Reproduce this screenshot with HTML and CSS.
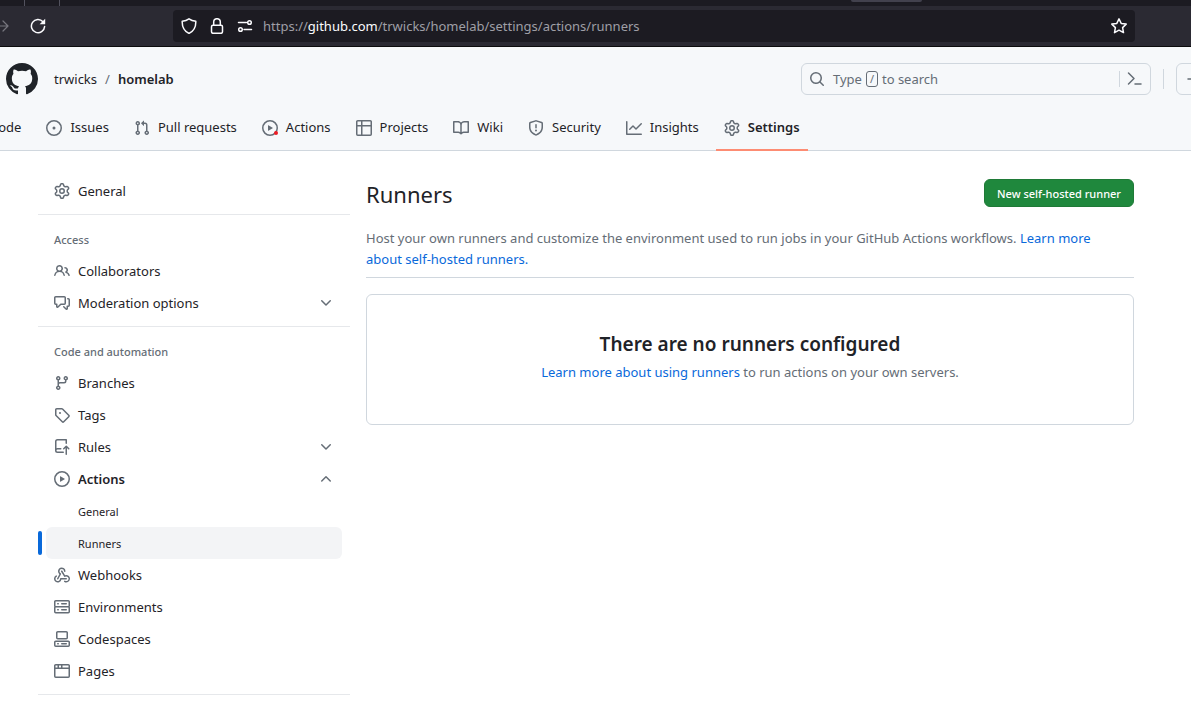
FILE: index.html
```html
<!DOCTYPE html>
<html lang="en">
<head>
<meta charset="utf-8">
<title>Runners · trwicks/homelab</title>
<link rel="stylesheet" href="styles.css">
</head>
<body>
<svg class="sprite" aria-hidden="true">
  <symbol id="gear" viewBox="0 0 16 16"><path d="M8 0a8.2 8.2 0 0 1 .701.031C9.444.095 9.99.645 10.16 1.29l.288 1.107c.018.066.079.158.212.224.231.114.454.243.668.386.123.082.233.09.299.071l1.103-.303c.644-.176 1.392.021 1.82.63.27.385.506.792.704 1.218.315.675.111 1.422-.364 1.891l-.814.806c-.049.048-.098.147-.088.294.016.257.016.515 0 .772-.01.147.038.246.088.294l.814.806c.475.469.679 1.216.364 1.891a7.977 7.977 0 0 1-.704 1.217c-.428.61-1.176.807-1.82.63l-1.102-.302c-.067-.019-.177-.011-.3.071a5.909 5.909 0 0 1-.668.386c-.133.066-.194.158-.211.224l-.29 1.106c-.168.646-.715 1.196-1.458 1.26a8.006 8.006 0 0 1-1.402 0c-.743-.064-1.289-.614-1.458-1.26l-.289-1.106c-.018-.066-.079-.158-.212-.224a5.738 5.738 0 0 1-.668-.386c-.123-.082-.233-.09-.299-.071l-1.103.303c-.644.176-1.392-.021-1.82-.63a8.12 8.12 0 0 1-.704-1.218c-.315-.675-.111-1.422.363-1.891l.815-.806c.05-.048.098-.147.088-.294a6.214 6.214 0 0 1 0-.772c.01-.147-.038-.246-.088-.294l-.815-.806C.635 6.045.431 5.298.746 4.623a7.92 7.92 0 0 1 .704-1.217c.428-.61 1.176-.807 1.82-.63l1.102.302c.067.019.177.011.3-.071.214-.143.437-.272.668-.386.133-.066.194-.158.211-.224l.29-1.106C6.009.645 6.556.095 7.299.03 7.53.01 7.764 0 8 0Zm-.571 1.525c-.036.003-.108.036-.137.146l-.289 1.105c-.147.561-.549.967-.998 1.189-.173.086-.34.183-.5.29-.417.278-.97.423-1.529.27l-1.103-.303c-.109-.03-.175.016-.195.045-.22.312-.412.644-.573.99-.014.031-.021.11.059.19l.815.806c.411.406.562.957.53 1.456a4.709 4.709 0 0 0 0 .582c.032.499-.119 1.05-.53 1.456l-.815.806c-.081.08-.073.159-.059.19.162.346.353.677.573.989.02.03.085.076.195.046l1.102-.303c.56-.153 1.113-.008 1.53.27.161.107.328.204.501.29.447.222.85.629.997 1.189l.289 1.105c.029.109.101.143.137.146a6.6 6.6 0 0 0 1.142 0c.036-.003.108-.036.137-.146l.289-1.105c.147-.561.549-.967.998-1.189.173-.086.34-.183.5-.29.417-.278.97-.423 1.529-.27l1.103.303c.109.029.175-.016.195-.045.22-.313.411-.644.573-.99.014-.031.021-.11-.059-.19l-.815-.806c-.411-.406-.562-.957-.53-1.456a4.709 4.709 0 0 0 0-.582c-.032-.499.119-1.05.53-1.456l.815-.806c.081-.08.073-.159.059-.19a6.464 6.464 0 0 0-.573-.989c-.02-.03-.085-.076-.195-.046l-1.102.303c-.56.153-1.113.008-1.53-.27a4.44 4.44 0 0 0-.501-.29c-.447-.222-.85-.629-.997-1.189l-.289-1.105c-.029-.11-.101-.143-.137-.146a6.6 6.6 0 0 0-1.142 0ZM11 8a3 3 0 1 1-6 0 3 3 0 0 1 6 0ZM9.5 8a1.5 1.5 0 1 0-3.001.001A1.5 1.5 0 0 0 9.5 8Z"/></symbol>
  <symbol id="code" viewBox="0 0 16 16"><path d="m11.28 3.22 4.25 4.25a.75.75 0 0 1 0 1.06l-4.25 4.25-1.06-1.06L13.94 8l-3.72-3.72ZM4.72 3.22.47 7.47a.75.75 0 0 0 0 1.06l4.25 4.25 1.06-1.06L2.06 8l3.72-3.72Z"/></symbol>
  <symbol id="issue" viewBox="0 0 16 16"><path d="M8 9.5a1.5 1.5 0 1 0 0-3 1.5 1.5 0 0 0 0 3Z"/><path d="M8 0a8 8 0 1 1 0 16A8 8 0 0 1 8 0ZM1.5 8a6.5 6.5 0 1 0 13 0 6.5 6.5 0 0 0-13 0Z"/></symbol>
  <symbol id="pull" viewBox="0 0 16 16"><path d="M1.5 3.25a2.25 2.25 0 1 1 3 2.122v5.256a2.251 2.251 0 1 1-1.5 0V5.372A2.25 2.25 0 0 1 1.5 3.25Zm5.677-.177L9.573.677A.25.25 0 0 1 10 .854V2.5h1A2.5 2.5 0 0 1 13.5 5v5.628a2.251 2.251 0 1 1-1.5 0V5a1 1 0 0 0-1-1h-1v1.646a.25.25 0 0 1-.427.177L7.177 3.427a.25.25 0 0 1 0-.354ZM3.75 2.5a.75.75 0 1 0 0 1.5.75.75 0 0 0 0-1.5Zm0 9.5a.75.75 0 1 0 0 1.5.75.75 0 0 0 0-1.5Zm8.25.75a.75.75 0 1 0 1.5 0 .75.75 0 0 0-1.5 0Z"/></symbol>
  <symbol id="play" viewBox="0 0 16 16"><path d="M8 0a8 8 0 1 1 0 16A8 8 0 0 1 8 0ZM1.5 8a6.5 6.5 0 1 0 13 0 6.5 6.5 0 0 0-13 0Zm4.879-2.773 4.264 2.559a.25.25 0 0 1 0 .428l-4.264 2.559A.25.25 0 0 1 6 10.559V5.442a.25.25 0 0 1 .379-.215Z"/></symbol>
  <symbol id="table" viewBox="0 0 16 16"><path d="M0 1.75C0 .784.784 0 1.75 0h12.5C15.216 0 16 .784 16 1.75v12.5A1.75 1.75 0 0 1 14.25 16H1.75A1.75 1.75 0 0 1 0 14.25ZM6.5 6.5v8h7.75a.25.25 0 0 0 .25-.25V6.5Zm8-1.5V1.75a.25.25 0 0 0-.25-.25H6.5V5Zm-13 1.5v7.75c0 .138.112.25.25.25H5v-8ZM5 5V1.5H1.75a.25.25 0 0 0-.25.25V5Z"/></symbol>
  <symbol id="book" viewBox="0 0 16 16"><path d="M0 1.75A.75.75 0 0 1 .75 1h4.253c1.227 0 2.317.59 3 1.501A3.743 3.743 0 0 1 11.006 1h4.245a.75.75 0 0 1 .75.75v10.5a.75.75 0 0 1-.75.75h-4.507a2.25 2.25 0 0 0-1.591.659l-.622.621a.75.75 0 0 1-1.06 0l-.622-.621A2.25 2.25 0 0 0 5.258 13H.75a.75.75 0 0 1-.75-.75Zm7.251 10.324.004-5.073-.002-2.253A2.25 2.25 0 0 0 5.003 2.5H1.5v9h3.757a3.75 3.75 0 0 1 1.994.574ZM8.755 4.75l-.004 7.322a3.752 3.752 0 0 1 1.992-.572H14.5v-9h-3.495a2.25 2.25 0 0 0-2.25 2.25Z"/></symbol>
  <symbol id="shield" viewBox="0 0 16 16"><path d="M7.467.133a1.748 1.748 0 0 1 1.066 0l5.25 1.68A1.75 1.75 0 0 1 15 3.48V7c0 1.566-.32 3.182-1.303 4.682-.983 1.498-2.585 2.813-5.032 3.855a1.697 1.697 0 0 1-1.33 0c-2.447-1.042-4.049-2.357-5.032-3.855C1.32 10.182 1 8.566 1 7V3.48a1.755 1.755 0 0 1 1.217-1.667Zm.61 1.429a.25.25 0 0 0-.153 0l-5.25 1.68a.25.25 0 0 0-.174.238V7c0 1.358.275 2.666 1.057 3.86.784 1.194 2.121 2.34 4.366 3.297a.196.196 0 0 0 .154 0c2.245-.956 3.582-2.104 4.366-3.298C13.225 9.666 13.5 8.36 13.5 7V3.48a.251.251 0 0 0-.174-.237l-5.25-1.68ZM8.75 4.75v3a.75.75 0 0 1-1.5 0v-3a.75.75 0 0 1 1.5 0ZM9 10.5a1 1 0 1 1-2 0 1 1 0 0 1 2 0Z"/></symbol>
  <symbol id="graph" viewBox="0 0 16 16"><path d="M1.5 1.75V13.5h13.75a.75.75 0 0 1 0 1.5H.75a.75.75 0 0 1-.75-.75V1.75a.75.75 0 0 1 1.5 0Zm14.28 2.53-5.25 5.25a.75.75 0 0 1-1.06 0L7 7.06 4.28 9.78a.751.751 0 0 1-1.06-1.06l3.25-3.25a.75.75 0 0 1 1.06 0L10 7.94l4.72-4.72a.751.751 0 0 1 1.06 1.06Z"/></symbol>
  <symbol id="search" viewBox="0 0 16 16"><path d="M10.68 11.74a6 6 0 0 1-7.922-8.982 6 6 0 0 1 8.982 7.922l3.04 3.04a.749.749 0 1 1-1.06 1.06ZM11.5 7a4.499 4.499 0 1 0-8.997 0A4.499 4.499 0 0 0 11.5 7Z"/></symbol>
  <symbol id="people" viewBox="0 0 16 16"><path d="M2 5.5a3.5 3.5 0 1 1 5.898 2.549 5.508 5.508 0 0 1 3.034 4.084.75.75 0 1 1-1.482.235 4 4 0 0 0-7.9 0 .75.75 0 0 1-1.482-.236A5.507 5.507 0 0 1 3.102 8.05 3.493 3.493 0 0 1 2 5.5ZM11 4a3.001 3.001 0 0 1 2.22 5.018 5.01 5.01 0 0 1 2.56 3.012.749.749 0 0 1-1.44.408 3.507 3.507 0 0 0-2.522-2.372.75.75 0 0 1-.574-.73v-.352a.75.75 0 0 1 .416-.672A1.5 1.5 0 0 0 11 5.5.75.75 0 0 1 11 4Zm-5.5-.5a2 2 0 1 0-.001 3.999A2 2 0 0 0 5.5 3.5Z"/></symbol>
  <symbol id="comments" viewBox="0 0 16 16"><path d="M1.75 1h8.5c.966 0 1.75.784 1.75 1.75v5.5A1.75 1.75 0 0 1 10.25 10H7.061l-2.574 2.573A1.458 1.458 0 0 1 2 11.543V10h-.25A1.75 1.75 0 0 1 0 8.25v-5.5C0 1.784.784 1 1.75 1ZM1.5 2.75v5.5c0 .138.112.25.25.25h1a.75.75 0 0 1 .75.75v2.19l2.72-2.72a.749.749 0 0 1 .53-.22h3.5a.25.25 0 0 0 .25-.25v-5.5a.25.25 0 0 0-.25-.25h-8.5a.25.25 0 0 0-.25.25Zm13 2a.25.25 0 0 0-.25-.25h-.5a.75.75 0 0 1 0-1.5h.5c.966 0 1.75.784 1.75 1.75v5.5A1.75 1.75 0 0 1 14.25 12H14v1.543a1.458 1.458 0 0 1-2.487 1.03L9.22 12.28a.749.749 0 1 1 1.06-1.06l2.22 2.22v-2.19a.75.75 0 0 1 .75-.75h1a.25.25 0 0 0 .25-.25Z"/></symbol>
  <symbol id="branch" viewBox="0 0 16 16"><path d="M9.5 3.25a2.25 2.25 0 1 1 3 2.122V6A2.5 2.5 0 0 1 10 8.5H6a1 1 0 0 0-1 1v1.128a2.251 2.251 0 1 1-1.5 0V5.372a2.25 2.25 0 1 1 1.5 0v1.836A2.493 2.493 0 0 1 6 7h4a1 1 0 0 0 1-1v-.628A2.25 2.25 0 0 1 9.5 3.25Zm-6 0a.75.75 0 1 0 1.5 0 .75.75 0 0 0-1.5 0Zm8.25-.75a.75.75 0 1 0 0 1.5.75.75 0 0 0 0-1.5ZM4.25 12a.75.75 0 1 0 0 1.5.75.75 0 0 0 0-1.5Z"/></symbol>
  <symbol id="tag" viewBox="0 0 16 16"><path d="M1 7.775V2.75C1 1.784 1.784 1 2.75 1h5.025c.464 0 .91.184 1.238.513l6.25 6.25a1.75 1.75 0 0 1 0 2.474l-5.026 5.026a1.75 1.75 0 0 1-2.474 0l-6.25-6.25A1.752 1.752 0 0 1 1 7.775Zm1.5 0c0 .066.026.13.073.177l6.25 6.25a.25.25 0 0 0 .354 0l5.025-5.025a.25.25 0 0 0 0-.354l-6.25-6.25a.25.25 0 0 0-.177-.073H2.75a.25.25 0 0 0-.25.25ZM6 5a1 1 0 1 1 0 2 1 1 0 0 1 0-2Z"/></symbol>
  <symbol id="rules" viewBox="0 0 16 16"><path d="M1 2.5A2.5 2.5 0 0 1 3.5 0h8.75a.75.75 0 0 1 .75.75v3.5a.75.75 0 0 1-1.5 0V1.5h-8a1 1 0 0 0-1 1v6.708A2.493 2.493 0 0 1 3.5 9h3.25a.75.75 0 0 1 0 1.5H3.5a1 1 0 0 0 0 2h5.75a.75.75 0 0 1 0 1.5H3.5A2.5 2.5 0 0 1 1 11.5Zm13.23 7.79-1.24-1.224v6.184a.75.75 0 0 1-1.5 0V9.066L10.26 10.29a.75.75 0 0 1-1.04-1.08l2.505-2.474a.746.746 0 0 1 1.06 0l2.505 2.474a.75.75 0 0 1-1.06 1.08Z"/></symbol>
  <symbol id="hook" viewBox="0 0 16 16"><path d="M5.5 4.25a2.25 2.25 0 0 1 4.5 0 .75.75 0 0 0 1.5 0 3.75 3.75 0 1 0-6.14 2.889l-2.272 4.258a.75.75 0 0 0 1.324.706L7 7.25a.75.75 0 0 0-.309-1.015A2.25 2.25 0 0 1 5.5 4.25Z"/><path d="M7.364 3.607a.75.75 0 0 1 1.03.257l2.608 4.349a3.75 3.75 0 1 1-.628 6.785.75.75 0 0 1 .752-1.299 2.25 2.25 0 1 0-.033-3.88.75.75 0 0 1-1.03-.256L7.107 4.636a.75.75 0 0 1 .257-1.03Z"/><path d="M2.9 8.776A.75.75 0 0 1 2.625 9.8 2.25 2.25 0 1 0 6 11.75a.75.75 0 0 1 .75-.751h5.5a.75.75 0 0 1 0 1.5H7.425a3.751 3.751 0 1 1-5.55-3.998.75.75 0 0 1 1.024.274Z"/></symbol>
  <symbol id="server" viewBox="0 0 16 16"><path d="M1.75 1h12.5c.966 0 1.75.784 1.75 1.75v4c0 .372-.116.717-.314 1 .198.283.314.628.314 1v4a1.75 1.75 0 0 1-1.75 1.75H1.75A1.75 1.75 0 0 1 0 12.75v-4c0-.358.109-.707.314-1a1.739 1.739 0 0 1-.314-1v-4C0 1.784.784 1 1.750 1ZM1.500 2.750v4c0 .138.112.25.25.25h12.500a.25.25 0 0 0 .25-.25v-4a.25.25 0 0 0-.25-.25H1.750a.25.25 0 0 0-.25.25Zm.25 5.750a.25.25 0 0 0-.25.25v4c0 .138.112.25.25.25h12.500a.25.25 0 0 0 .25-.25v-4a.25.25 0 0 0-.25-.25ZM7 4.750A.75.75 0 0 1 7.750 4h4.500a.75.75 0 0 1 0 1.500h-4.500A.75.75 0 0 1 7 4.750ZM7.750 10h4.500a.75.75 0 0 1 0 1.500h-4.500a.75.75 0 0 1 0-1.500ZM3 4.750A.75.75 0 0 1 3.750 4h.5a.75.75 0 0 1 0 1.500h-.5A.75.75 0 0 1 3 4.750ZM3.750 10h.5a.75.75 0 0 1 0 1.500h-.5a.75.75 0 0 1 0-1.500Z"/></symbol>
  <symbol id="codespace" viewBox="0 0 16 16"><path d="M0 11.25c0-.966.784-1.75 1.75-1.75h12.5c.966 0 1.75.784 1.75 1.75v3A1.75 1.75 0 0 1 14.25 16H1.75A1.75 1.75 0 0 1 0 14.25Zm2-9.5C2 .784 2.784 0 3.75 0h8.5C13.216 0 14 .784 14 1.75v5a1.75 1.75 0 0 1-1.75 1.75h-8.5A1.75 1.75 0 0 1 2 6.75Zm1.75-.25a.25.25 0 0 0-.25.25v5c0 .138.112.25.25.25h8.5a.25.25 0 0 0 .25-.25v-5a.25.25 0 0 0-.25-.25Zm-2 9.5a.25.25 0 0 0-.25.25v3c0 .138.112.25.25.25h12.5a.25.25 0 0 0 .25-.25v-3a.25.25 0 0 0-.25-.25ZM7 12.75a.75.75 0 0 1 .75-.75h4.5a.75.75 0 0 1 0 1.5h-4.5a.75.75 0 0 1-.75-.75Zm-4 0a.75.75 0 0 1 .75-.75h.5a.75.75 0 0 1 0 1.5h-.5a.75.75 0 0 1-.75-.75Z"/></symbol>
  <symbol id="browser" viewBox="0 0 16 16"><path d="M0 2.75C0 1.784.784 1 1.75 1h12.5c.966 0 1.75.784 1.75 1.75v10.5A1.75 1.75 0 0 1 14.25 15H1.75A1.75 1.75 0 0 1 0 13.25ZM14.5 6h-13v7.25c0 .138.112.25.25.25h12.5a.25.25 0 0 0 .25-.25Zm-6-3.5v2h6V2.75a.25.25 0 0 0-.25-.25ZM5 2.5v2h2v-2Zm-3.25 0a.25.25 0 0 0-.25.25V4.5h2v-2Z"/></symbol>
  <symbol id="down" viewBox="0 0 16 16"><path d="M12.78 5.22a.749.749 0 0 1 0 1.06l-4.25 4.25a.749.749 0 0 1-1.06 0L3.22 6.28a.749.749 0 1 1 1.06-1.06L8 8.939l3.72-3.719a.749.749 0 0 1 1.06 0Z"/></symbol>
  <symbol id="up" viewBox="0 0 16 16"><path d="M3.22 10.53a.749.749 0 0 1 0-1.06l4.25-4.25a.749.749 0 0 1 1.06 0l4.25 4.25a.749.749 0 1 1-1.06 1.06L8 6.811 4.28 10.53a.749.749 0 0 1-1.06 0Z"/></symbol>
  <symbol id="mark" viewBox="0 0 16 16"><path d="M8 0c4.42 0 8 3.58 8 8a8.013 8.013 0 0 1-5.45 7.59c-.4.08-.55-.17-.55-.38 0-.27.01-1.13.01-2.2 0-.75-.25-1.23-.54-1.48 1.78-.2 3.65-.88 3.65-3.95 0-.88-.31-1.59-.82-2.15.08-.2.36-1.02-.08-2.12 0 0-.67-.22-2.2.82-.64-.18-1.32-.27-2-.27-.68 0-1.36.09-2 .27-1.53-1.03-2.2-.82-2.2-.82-.44 1.1-.16 1.92-.08 2.12-.51.56-.82 1.28-.82 2.15 0 3.06 1.86 3.75 3.64 3.95-.23.2-.44.55-.51 1.07-.46.21-1.61.55-2.33-.66-.15-.24-.6-.83-1.23-.82-.67.01-.27.38.01.53.34.19.73.9.82 1.13.16.45.68 1.31 2.69.94 0 .67.01 1.3.01 1.49 0 .21-.15.45-.55.38A7.995 7.995 0 0 1 0 8c0-4.42 3.58-8 8-8Z"/></symbol>
</svg>

<div class="browser">
  <div class="browser-tabs"><span class="tab-line"></span><span class="tab-line"></span><span class="tab-pill"></span></div>
  <div class="toolbar">
    <button class="tool dim" aria-label="Forward"><svg class="icon" viewBox="0 0 16 16"><path class="line" d="M0 8h14M9 3l5 5-5 5"/></svg></button>
    <button class="tool" aria-label="Reload"><svg class="icon" viewBox="0 0 16 16"><path class="line bold" d="M13 3.8A6.6 6.6 0 1 0 14.6 8.6"/><path d="M15.2.7v5a.6.6 0 0 1-.6.6h-5Z"/></svg></button>
    <div class="address">
      <svg class="icon" viewBox="0 0 16 16"><path class="line bold" d="M8 .8C10 2.200 12.600 3 14.800 3.300 15 9 12.500 13.300 8 15.400 3.500 13.300 1 9 1.200 3.300 3.400 3 6 2.200 8 .8Z"/></svg>
      <svg class="icon" viewBox="0 0 16 16"><rect class="line bold" x="2.500" y="7.300" width="11" height="8" rx="1.500"/><path class="line bold" d="M4.700 7V4a3.300 3.300 0 0 1 6.600 0v3"/></svg>
      <svg class="icon" viewBox="0 0 16 16"><path class="line bold" d="M1.500 4.500h8M7 11.500h7.500"/><circle class="line bold" cx="12.500" cy="4.500" r="1.800"/><circle class="line bold" cx="3.500" cy="11.500" r="1.800"/></svg>
      <span class="url">https://<b>github.com</b>/trwicks/homelab/settings/actions/runners</span>
      <button class="tool" aria-label="Bookmark"><svg class="icon" viewBox="0 0 16 16"><path class="line bold" d="m8 .9 2.200 4.500 5 .7-3.600 3.500.9 5L8 12.200l-4.500 2.400.9-5L.8 6.100l5-.7Z"/></svg></button>
    </div>
  </div>
</div>

<header class="header">
  <div class="header-row">
    <a href="#" aria-label="Homepage"><svg class="logo"><use href="#mark"/></svg></a>
    <nav class="crumbs" aria-label="Breadcrumb"><a href="#">trwicks</a><span class="slash">/</span><a class="strong" href="#">homelab</a></nav>
    <div class="search">
      <button class="search-button"><svg class="icon"><use href="#search"/></svg><span>Type</span><kbd>/</kbd><span>to search</span></button>
      <button class="palette" aria-label="Command palette"><svg class="icon" viewBox="0 0 16 16"><path class="line bold" d="m1.500 2 5.500 5.500L1.500 13M8 13h6"/></svg></button>
    </div>
    <span class="divider"></span>
    <button class="create" aria-label="Create new"><svg class="icon" viewBox="0 0 16 16"><path class="line bold" d="M3 8h12M9 2v12"/></svg></button>
  </div>
  <nav class="tabs" aria-label="Repository">
    <a href="#"><svg class="icon"><use href="#code"/></svg>Code</a>
    <a href="#"><svg class="icon"><use href="#issue"/></svg>Issues</a>
    <a href="#"><svg class="icon"><use href="#pull"/></svg>Pull requests</a>
    <a href="#"><span class="marked"><svg class="icon"><use href="#play"/></svg></span>Actions</a>
    <a href="#"><svg class="icon"><use href="#table"/></svg>Projects</a>
    <a href="#"><svg class="icon"><use href="#book"/></svg>Wiki</a>
    <a href="#"><svg class="icon"><use href="#shield"/></svg>Security</a>
    <a href="#"><svg class="icon"><use href="#graph"/></svg>Insights</a>
    <a class="selected" href="#" aria-current="page"><svg class="icon"><use href="#gear"/></svg>Settings</a>
  </nav>
</header>

<div class="layout">
  <nav class="sidebar" aria-label="Settings">
    <ul>
      <li><a href="#"><svg class="icon"><use href="#gear"/></svg>General</a></li>
    </ul>
    <h2>Access</h2>
    <ul>
      <li><a href="#"><svg class="icon"><use href="#people"/></svg>Collaborators</a></li>
      <li><button><svg class="icon"><use href="#comments"/></svg>Moderation options<svg class="icon chevron"><use href="#down"/></svg></button></li>
    </ul>
    <h2>Code and automation</h2>
    <ul>
      <li><a href="#"><svg class="icon"><use href="#branch"/></svg>Branches</a></li>
      <li><a href="#"><svg class="icon"><use href="#tag"/></svg>Tags</a></li>
      <li><button><svg class="icon"><use href="#rules"/></svg>Rules<svg class="icon chevron"><use href="#down"/></svg></button></li>
      <li><button class="strong" aria-expanded="true"><svg class="icon"><use href="#play"/></svg>Actions<svg class="icon chevron"><use href="#up"/></svg></button></li>
      <li><a class="sub" href="#">General</a></li>
      <li class="current"><a class="sub" href="#" aria-current="page">Runners</a></li>
      <li><a href="#"><svg class="icon"><use href="#hook"/></svg>Webhooks</a></li>
      <li><a href="#"><svg class="icon"><use href="#server"/></svg>Environments</a></li>
      <li><a href="#"><svg class="icon"><use href="#codespace"/></svg>Codespaces</a></li>
      <li><a href="#"><svg class="icon"><use href="#browser"/></svg>Pages</a></li>
    </ul>
  </nav>
  <main class="main">
    <div class="title-row"><h1>Runners</h1><button class="primary">New self-hosted runner</button></div>
    <p class="intro">Host your own runners and customize the environment used to run jobs in your GitHub Actions workflows. <a href="#">Learn more about self-hosted runners.</a></p>
    <section class="blank">
      <h3>There are no runners configured</h3>
      <p><a href="#">Learn more about using runners</a> to run actions on your own servers.</p>
    </section>
  </main>
</div>
</body>
</html>
```
FILE: styles.css
```css
* { box-sizing: border-box; }

body {
  margin: 0;
  overflow-x: hidden;
  background: #fff;
  color: #1f2328;
  font: 13px/21px "Noto Sans", "Open Sans", sans-serif;
}

a { color: inherit; text-decoration: none; }
button { margin: 0; padding: 0; border: 0; background: none; color: inherit; font: inherit; }
h1, h2, h3, p, ul { margin: 0; padding: 0; }
ul { list-style: none; }
.sprite { display: none; }
.icon { display: block; flex: none; width: 16px; height: 16px; fill: currentColor; }
.line { fill: none; stroke: currentColor; stroke-width: 1.2; stroke-linecap: round; stroke-linejoin: round; }
.line.bold { stroke-width: 1.5; }
.strong { font-weight: 600; }

/* Browser chrome */
.browser { background: #2b2a33; color: #fbfbfe; border-bottom: 1px solid #0c0c0d; }
.browser-tabs { display: flex; height: 6px; padding-left: 24px; background: #1c1b22; }
.tab-line { width: 1px; margin-right: 34px; background: #52525e; }
.tab-pill { width: 71px; height: 2px; margin-left: 757px; border-radius: 0 0 3px 3px; background: #42414d; }
.toolbar { display: flex; align-items: center; height: 40px; padding: 0 56px 0 0; }
.toolbar > .tool { margin-right: 22px; margin-left: -6px; }
.toolbar > .tool + .tool { margin-right: 127px; margin-left: -2px; }
.dim { color: #77767f; }
.address { display: flex; flex: 1; align-items: center; gap: 12px; height: 32px; padding: 0 8px; border-radius: 4px; background: #1c1b22; }
.url { flex: 1; margin-left: -2px; color: #9f9fa6; }
.url b { color: #fbfbfe; font-weight: 400; }

/* Site header */
.header { background: #f6f8fa; border-bottom: 1px solid #d0d7de; }
.header-row { display: flex; align-items: center; padding: 16px 0 8px 6px; }
.logo { display: block; width: 32px; height: 32px; fill: #1f2328; }
.crumbs { display: flex; flex: 1; gap: 8px; margin-left: 16px; }
.slash { color: #656d76; }
.search { display: flex; align-items: center; width: 350px; height: 32px; border: 1px solid #d0d7de; border-radius: 6px; color: #656d76; }
.search-button { display: flex; flex: 1; align-items: center; gap: 4px; padding-left: 7px; }
.search-button .icon { margin-right: 4px; }
kbd { width: 12px; height: 16px; border: 1px solid #656d76; border-radius: 3px; font: 11px/14px "Noto Sans", sans-serif; text-align: center; }
.palette { padding: 0 7px; border-left: 1px solid #d0d7de; }
.divider { width: 1px; height: 20px; margin: 0 12px; background: #d0d7de; }
.create { width: 60px; height: 32px; margin-right: -45px; padding-left: 8px; border: 1px solid #d0d7de; border-radius: 6px; color: #656d76; }

.tabs { display: flex; gap: 9px; margin: 0 0 -1px -42px; }
.tabs a { display: flex; align-items: center; gap: 8px; height: 48px; padding: 3px 8px 0; border-bottom: 2px solid transparent; white-space: nowrap; }
.tabs .icon { color: #656d76; }
.tabs .selected { border-color: #fd8c73; font-weight: 600; }
.marked { position: relative; }
.marked::after { content: ""; position: absolute; right: 0; bottom: 1px; width: 4px; height: 4px; border-radius: 2px; background: #ed1c24; }

/* Page */
.layout { display: grid; grid-template-columns: 312px 1fr; gap: 16px; padding: 24px 57px 0 38px; }
.sidebar ul { padding-bottom: 7px; border-bottom: 1px solid #e6e8eb; }
.sidebar li { display: flex; padding: 0 8px; }
.sidebar li a, .sidebar button { display: flex; flex: 1; align-items: center; gap: 8px; height: 32px; padding: 0 8px; border-radius: 6px; text-align: left; }
.sidebar .icon { color: #656d76; }
.chevron { margin-left: auto; }
.sidebar h2 { padding: 15px 16px 6px; color: #656d76; font-size: 11px; line-height: 19px; font-weight: 500; }
.sidebar li .sub { padding-left: 32px; font-size: 11px; }
.sidebar .current { align-items: center; padding-left: 0; }
.current::before { content: ""; width: 4px; height: 24px; margin-right: 4px; border-radius: 6px; background: #0969da; }
.sidebar .current a { background: #f3f4f6; }

.main { padding-top: 4px; }
.title-row { display: flex; align-items: flex-start; justify-content: space-between; margin-bottom: 19px; }
h1 { font-size: 22px; line-height: 30px; font-weight: 400; }
.primary { height: 28px; padding: 0 12px; border: 1px solid #1f7a37; border-radius: 6px; background: #1f883d; color: #fff; font-size: 11px; font-weight: 500; }
.intro { padding: 0 24px 7px 0; border-bottom: 1px solid #d0d7de; color: #656d76; }
.main a { color: #0969da; }
.blank { margin-top: 16px; padding: 34px 32px 41px; border: 1px solid #d0d7de; border-radius: 6px; color: #656d76; text-align: center; }
.blank h3 { margin-bottom: 3px; color: #1f2328; font-size: 19px; line-height: 30px; font-weight: 600; }
```
